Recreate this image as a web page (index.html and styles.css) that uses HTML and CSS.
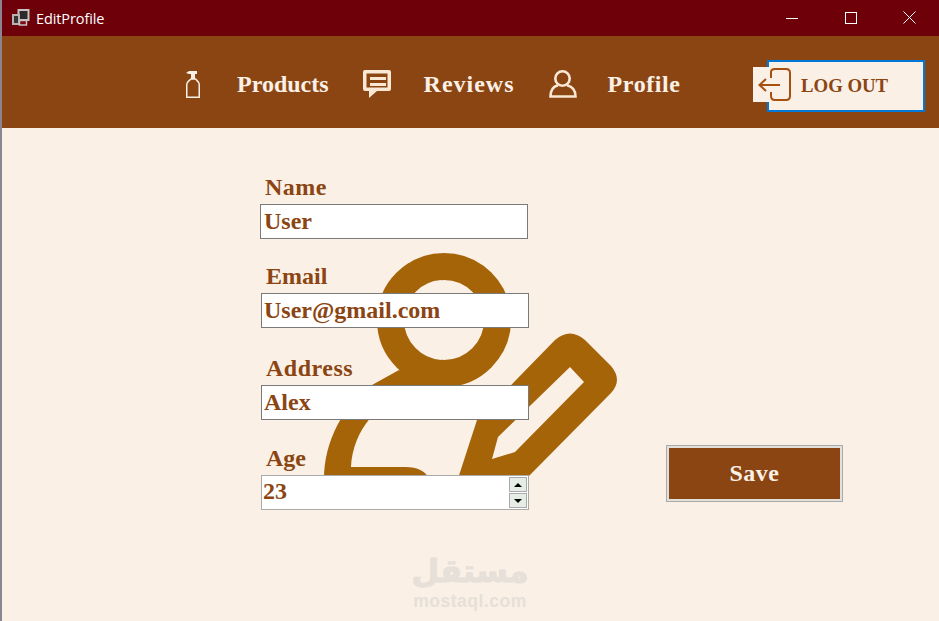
FILE: index.html
```html
<!DOCTYPE html>
<html lang="en">
<head>
<meta charset="utf-8">
<title>EditProfile</title>
<link rel="stylesheet" href="styles.css">
</head>
<body>
<div class="window">
  <header class="titlebar">
    <svg class="app-icon" width="18" height="17" viewBox="0 0 18 17">
      <rect x="6.500" y="1" width="10" height="10" fill="#2e2a2a" stroke="#c8c2c2" stroke-width="2"/>
      <rect x="1" y="6" width="6" height="9" fill="#3a3535" stroke="#b8b2b2" stroke-width="2"/>
      <rect x="7.500" y="11.500" width="7" height="4.500" fill="#7a0a10" stroke="#c8c2c2" stroke-width="1.500"/>
    </svg>
    <span class="title">EditProfile</span>
    <div class="controls">
      <span class="control"><svg width="12" height="12" viewBox="0 0 12 12"><path d="M0 6.500H12" stroke="#fff"/></svg></span>
      <span class="control"><svg width="12" height="12" viewBox="0 0 12 12"><rect x="0.500" y="0.500" width="11" height="11" fill="none" stroke="#fff"/></svg></span>
      <span class="control"><svg width="13" height="13" viewBox="0 0 13 13"><path d="M.5 .5L12.500 12.500M12.500 .5L.5 12.500" stroke="#fff"/></svg></span>
    </div>
  </header>

  <nav class="nav">
    <div class="nav-item nav-products">
      <svg width="15" height="28" viewBox="0 0 15 28">
        <path d="M.75 27.250V14.500C.75 12 3 10.500 5 9H9.500C11 10.500 13.250 12 13.250 14.500V27.250Z" fill="none" stroke="#faf0e6" stroke-width="1.500"/>
        <path d="M0 3L3 1H11V4H9V9H5V4H3Z" fill="#faf0e6"/>
      </svg>
      <span>Products</span>
    </div>
    <div class="nav-item nav-reviews">
      <svg width="28" height="28" viewBox="0 0 28 28">
        <path fill="#f8e8d4" fill-rule="evenodd" d="M2 0H26Q28 0 28 2V19Q28 21 26 21H14L6 28V21H2Q0 21 0 19V2Q0 0 2 0ZM3.500 3.500V17.500H24.500V3.500Z"/>
        <path fill="#f8e8d4" d="M7 7H23V10H7ZM7 13H23V16H7Z"/>
      </svg>
      <span>Reviews</span>
    </div>
    <div class="nav-item nav-profile">
      <svg width="28" height="28" viewBox="0 0 28 28" fill="none" stroke="#f8e8d4" stroke-width="2.600">
        <circle cx="13.500" cy="8.500" r="7.200"/>
        <path d="M9 15.200C4 16.500 1.500 20.500 1.500 26.500H26.500C26.500 20.500 23.500 16.500 18 15.200"/>
      </svg>
      <span>Profile</span>
    </div>
    <button class="logout" type="button">
      <span class="logout-icon">
        <svg width="38" height="35" viewBox="0 0 38 35" fill="none" stroke="#a5500f" stroke-width="2">
          <path d="M18 11V5Q18 2 22 2H33Q37 2 37 6V29Q37 33 33 33H22Q18 33 18 29V25"/>
          <path d="M27 18H7M13 12L6.500 18L13 24"/>
        </svg>
      </span>
      LOG OUT
    </button>
  </nav>

  <main class="content">
    <svg class="figure" width="320" height="270" viewBox="300 250 320 270">
      <circle cx="444" cy="320" r="53.500" fill="none" stroke="#a56408" stroke-width="27"/>
      <path fill="#a56408" d="M399 370L372 385C344 405 324 440 324 480V494H420L430 480Q424 467 405 467H351C353 430 378 400 420 385L440 388Z"/>
      <path fill="#a56408" fill-rule="evenodd" d="M452 497L477 420L555 340Q570 327 585 340L611 366Q623 380 611 393L525 480ZM570 367L584 382L515 452L492 459L498 437Z"/>
    </svg>

    <form class="form">
      <div class="field field-name">
        <label class="label label-wide" for="name">Name</label>
        <input class="input" id="name" value="User">
      </div>
      <div class="field field-email">
        <label class="label" for="email">Email</label>
        <input class="input" id="email" value="User@gmail.com">
      </div>
      <div class="field field-address">
        <label class="label label-wide" for="address">Address</label>
        <input class="input" id="address" value="Alex">
      </div>
      <div class="field field-age">
        <label class="label" for="age">Age</label>
        <div class="spin">
          <input class="spin-input" id="age" value="23">
          <div class="spin-buttons">
            <span class="spin-btn"><span class="arrow-up"></span></span>
            <span class="spin-btn"><span class="arrow-down"></span></span>
          </div>
        </div>
      </div>
    </form>

    <button class="save" type="button">Save</button>

    <div class="watermark">
      <div class="wm-ar" lang="ar" dir="rtl">مستقل</div>
      <div class="wm-en">mostaql.com</div>
    </div>
  </main>
</div>
</body>
</html>
```
FILE: styles.css
```css
* { box-sizing: border-box; }
html, body { margin: 0; height: 100%; }
body { overflow: hidden; background: #faf0e6; }

.window {
  display: flex;
  flex-direction: column;
  height: 621px;
  border-left: 2px solid #8a8590;
  font-family: "Liberation Serif", serif;
  font-weight: bold;
}

/* title bar */
.titlebar {
  display: flex;
  align-items: center;
  height: 36px;
  background: #6d0008;
  color: #fff;
  padding-left: 10px;
  flex: none;
}
.app-icon { flex: none; margin-top: -1px; }
.title {
  margin-left: 6px;
  font: 400 14.500px "Open Sans", sans-serif;
  letter-spacing: -0.100px;
  color: #fff;
}
.controls { display: flex; margin-left: auto; }
.control {
  width: 59px;
  height: 36px;
  display: flex;
  align-items: center;
  justify-content: center;
  padding-bottom: 1px;
}

/* nav */
.nav {
  display: flex;
  align-items: center;
  height: 92px;
  flex: none;
  background: #8b4513;
  color: #faf0e6;
  padding: 4px 14px 0 184px;
  font-size: 24px;
}
.nav-item { display: flex; align-items: center; }
.nav-item svg { flex: none; }
.nav-products { gap: 36px; }
.nav-reviews { gap: 33px; margin-left: 34px; }
.nav-reviews span { letter-spacing: 1px; }
.nav-profile { gap: 31px; margin-left: 34px; }
.nav-profile span { letter-spacing: 0.600px; }
.logout {
  position: relative;
  margin-left: auto;
  margin-top: 4px;
  width: 158px;
  height: 52px;
  background: #faf0e6;
  border: 2px solid #0078d7;
  color: #8b4513;
  font: bold 18.800px "Liberation Serif", serif;
  padding: 0 0 0 32px;
  text-align: left;
}
.logout-icon {
  position: absolute;
  left: -16px;
  top: 5px;
  width: 35px;
  height: 35px;
  background: #faf0e6;
}
.logout-icon svg { display: block; }

/* content */
.content {
  position: relative;
  flex: 1;
  display: flex;
  align-items: flex-start;
  padding: 45px 0 0 258px;
}
.figure {
  position: absolute;
  left: 298px;
  top: 122px;
}
.form {
  position: relative;
  width: 269px;
  flex: none;
  color: #8b4513;
  font-size: 24px;
}
.field { margin-left: 1px; }
.field-name { margin-left: 0; }
.field-email { margin-top: 23px; }
.field-address { margin-top: 26px; }
.field-age { margin-top: 24px; }
.label {
  display: block;
  height: 28px;
  line-height: 28px;
  margin: 0 0 3px 5px;
}
.label-wide { letter-spacing: 0.500px; }
.input {
  display: block;
  width: 268px;
  height: 35px;
  padding: 0 2px;
  border: 1px solid #7a7a7a;
  background: #fff;
  font: bold 24px "Liberation Serif", serif;
  color: #8b4513;
  outline: none;
}
.field-name .input { padding-left: 3px; }
.spin {
  display: flex;
  align-items: center;
  width: 268px;
  height: 35px;
  border: 1px solid #aaa;
  background: #fff;
}
.spin-input {
  flex: 1;
  min-width: 0;
  height: 100%;
  padding: 0 1px 2px;
  border: 0;
  background: transparent;
  font: bold 24px "Liberation Serif", serif;
  color: #8b4513;
  outline: none;
}
.spin-buttons {
  display: flex;
  flex-direction: column;
  gap: 1px;
  width: 18px;
  margin-right: 1px;
}
.spin-btn {
  display: flex;
  align-items: center;
  justify-content: center;
  height: 15px;
  background: #e6ece6;
  border: 1px solid #aaa;
}
.arrow-up, .arrow-down {
  width: 0;
  height: 0;
  border-left: 4px solid transparent;
  border-right: 4px solid transparent;
}
.arrow-up { border-bottom: 4px solid #000; }
.arrow-down { border-top: 4px solid #000; }

.save {
  position: relative;
  flex: none;
  margin: 272px 0 0 137px;
  width: 177px;
  height: 57px;
  background: #8b4513;
  border: 1px solid #aaa;
  box-shadow: inset 0 0 0 2px #e3e0dc;
  color: #faf0e6;
  font: bold 24px "Liberation Serif", serif;
  letter-spacing: 0.500px;
  padding: 0;
}

/* watermark */
.watermark {
  position: absolute;
  left: 398px;
  top: 423px;
  width: 140px;
  text-align: center;
  color: #e6e0d8;
  line-height: 1;
}
.wm-ar {
  font: bold 32px/41px "DejaVu Sans", sans-serif;
  -webkit-text-stroke: 1px #e6e0d8;
}
.wm-en {
  font: bold 17.500px/18px "Liberation Sans", sans-serif;
  letter-spacing: 0.500px;
}
```
